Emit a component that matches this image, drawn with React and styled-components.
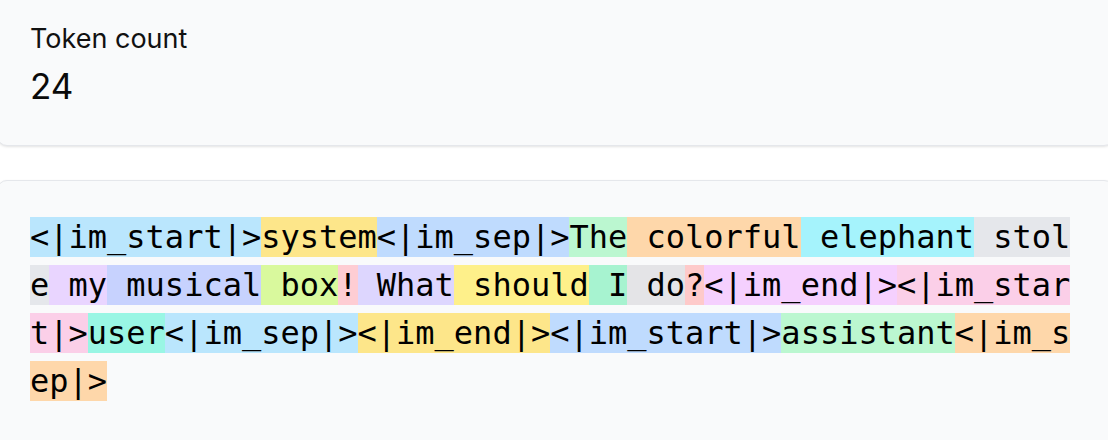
import React from "react";
import styled, { createGlobalStyle } from "styled-components";

const GlobalStyle = createGlobalStyle`
  html, body {
    margin: 0;
    padding: 0;
    background: #ffffff;
  }
  body {
    font-family: Inter, "Noto Sans", sans-serif;
    color: #0a0a0a;
  }
`;

// the shot is a crop of a wider, scrolled page
const Page = styled.main`
  display: flex;
  flex-direction: column;
  gap: 34px;
  margin: -14px -6px 0 -3px;
`;

const Card = styled.section`
  background: #f9fafb;
  border: 1px solid #e5e7eb;
  border-radius: 10px;
  box-shadow: 0 1px 3px rgba(0, 0, 0, 0.08), 0 1px 2px rgba(0, 0, 0, 0.04);
  padding: 32px 32px ${(p) => p.$bottom || "32px"};
`;

const Label = styled.div`
  font-size: 27px;
  line-height: 40px;
  color: #111111;
`;

const Value = styled.div`
  font-size: 35px;
  line-height: 54px;
  color: #0a0a0a;
`;

const TokenText = styled.pre`
  margin: 0;
  max-width: 1048px;
  font-family: "DejaVu Sans Mono", "Liberation Mono", monospace;
  font-size: 32px;
  line-height: 48px;
  white-space: pre-wrap;
  word-break: break-all;
  color: #000000;
`;

const Token = styled.span`
  background: ${(p) => p.$bg};
  padding: 1px 0;
`;

const palette = [
  "#bae6fd", // sky
  "#fde68a", // amber
  "#bfdbfe", // blue
  "#bbf7d0", // green
  "#fed7aa", // orange
  "#a5f3fc", // cyan
  "#e5e7eb", // gray
  "#e9d5ff", // purple
  "#c7d2fe", // indigo
  "#d9f99d", // lime
  "#fecdd3", // rose
  "#ddd6fe", // violet
  "#fef08a", // yellow
  "#a7f3d0", // emerald
  "#e4e4e7", // zinc
  "#fecaca", // red
  "#f5d0fe", // fuchsia
  "#fbcfe8", // pink
  "#99f6e4", // teal
];

const tokens = [
  "<|im_start|>",
  "system",
  "<|im_sep|>",
  "The",
  " colorful",
  " elephant",
  " stole",
  " my",
  " musical",
  " box",
  "!",
  " What",
  " should",
  " I",
  " do",
  "?",
  "<|im_end|>",
  "<|im_start|>",
  "user",
  "<|im_sep|>",
  "<|im_end|>",
  "<|im_start|>",
  "assistant",
  "<|im_sep|>",
];

export default function App() {
  return (
    <>
      <GlobalStyle />
      <Page>
        <Card>
          <Label>Token count</Label>
          <Value>{tokens.length}</Value>
        </Card>
        <Card $bottom="72px">
          <TokenText>
            {tokens.map((t, i) => (
              <Token key={i} $bg={palette[i % palette.length]}>
                {t}
              </Token>
            ))}
          </TokenText>
        </Card>
      </Page>
    </>
  );
}
